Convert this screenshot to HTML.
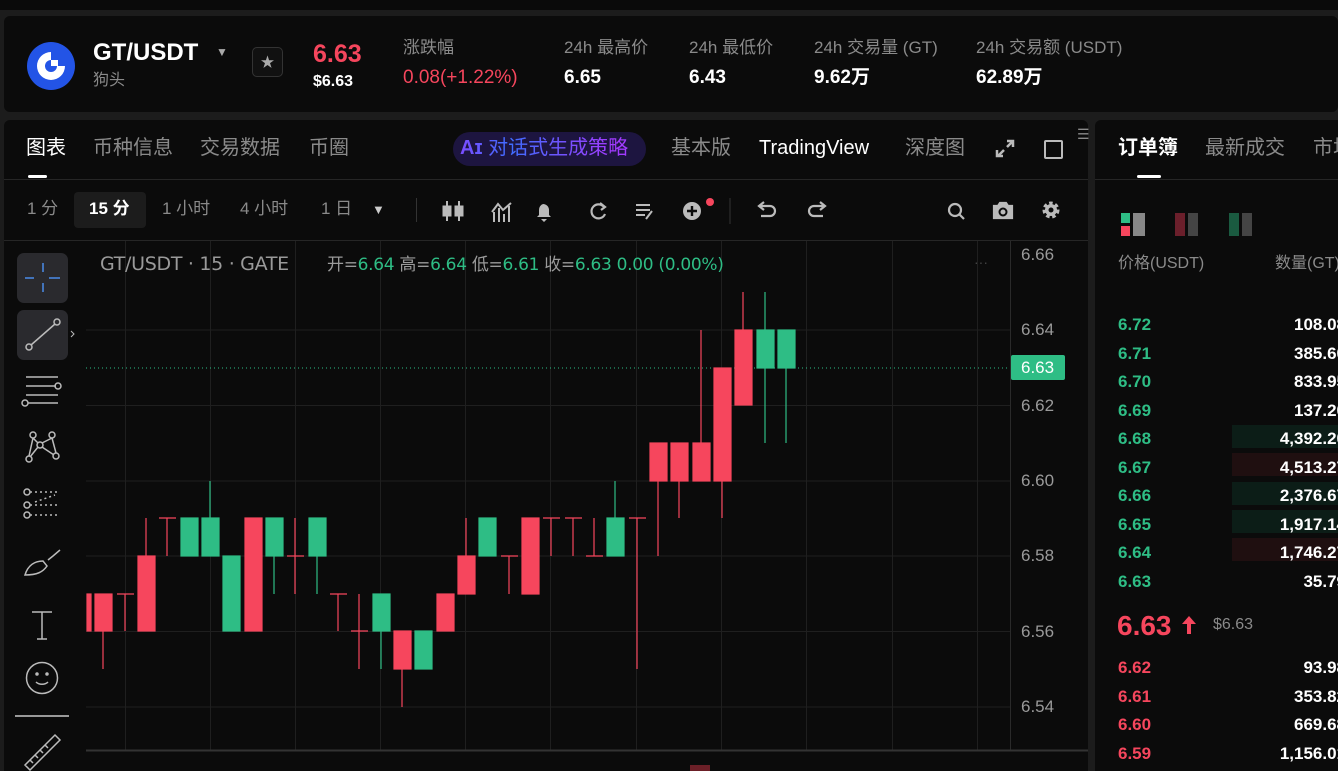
<!DOCTYPE html>
<html><head><meta charset="utf-8"><style>
*{margin:0;padding:0;box-sizing:border-box}
body{width:1338px;height:771px;background:#1c1c1c;overflow:hidden;font-family:"Liberation Sans","Noto Sans CJK SC",sans-serif;color:#fff;position:relative}
.p{position:absolute;background:#0b0b0b}
.t{position:absolute;white-space:nowrap;line-height:1.2}
.g{color:#8a8a8a}
.gr{color:#2ebd85}.rd{color:#f6465d}
</style></head><body>
<div class="p" style="left:0;top:0;width:1338px;height:10px;background:#0a0a0a"></div>
<div class="p" style="left:4px;top:16px;width:1334px;height:96px;border-radius:6px"></div>
<svg style="position:absolute;left:26px;top:41px" width="50" height="50" viewBox="0 0 50 50"><circle cx="25" cy="25" r="24" fill="#2354e6"/><path d="M25 11a14 14 0 1 0 14 14h-14z" fill="#fff"/><rect x="25" y="11" width="14" height="14" fill="#2354e6"/><circle cx="25" cy="25" r="6" fill="#2354e6"/><rect x="25" y="19" width="7" height="6" fill="#fff"/></svg>
<div class="t" style="left:93px;top:39px;font-size:24px;font-weight:bold">GT/USDT</div>
<div class="t" style="left:216px;top:45px;font-size:12px;color:#aaa">▼</div>
<div class="t g" style="left:93px;top:71px;font-size:16px">狗头</div>
<div style="position:absolute;left:252px;top:47px;width:31px;height:30px;border:1px solid #333;border-radius:5px;background:#111;color:#aaa;text-align:center;line-height:28px;font-size:14px">★</div>
<div class="t rd" style="left:313px;top:39px;font-size:25px;font-weight:bold">6.63</div>
<div class="t" style="left:313px;top:72px;font-size:16px;font-weight:bold">$6.63</div>
<div class="t g" style="left:403px;top:38px;font-size:17px">涨跌幅</div>
<div class="t rd" style="left:403px;top:67px;font-size:19px">0.08(+1.22%)</div>
<div class="t g" style="left:564px;top:38px;font-size:17px">24h 最高价</div>
<div class="t" style="left:564px;top:67px;font-size:19px;font-weight:bold">6.65</div>
<div class="t g" style="left:689px;top:38px;font-size:17px">24h 最低价</div>
<div class="t" style="left:689px;top:67px;font-size:19px;font-weight:bold">6.43</div>
<div class="t g" style="left:814px;top:38px;font-size:17px">24h 交易量 (GT)</div>
<div class="t" style="left:814px;top:67px;font-size:19px;font-weight:bold">9.62万</div>
<div class="t g" style="left:976px;top:38px;font-size:17px">24h 交易额 (USDT)</div>
<div class="t" style="left:976px;top:67px;font-size:19px;font-weight:bold">62.89万</div>

<div class="p" style="left:4px;top:120px;width:1084px;height:651px;border-radius:6px 6px 0 0"></div>
<div class="t" style="left:26px;top:136px;font-size:20px">图表</div>
<div style="position:absolute;left:28px;top:175px;width:19px;height:3px;background:#fff;border-radius:2px"></div>
<div class="t g" style="left:93px;top:136px;font-size:20px">币种信息</div>
<div class="t g" style="left:200px;top:136px;font-size:20px">交易数据</div>
<div class="t g" style="left:309px;top:136px;font-size:20px">币圈</div>
<div style="position:absolute;left:453px;top:132px;width:193px;height:34px;border-radius:17px;background:#1d1540"></div>
<div class="t" style="left:460px;top:136px;font-size:20px;background:linear-gradient(90deg,#7b4dff,#3f6dff 30%,#a13bff 90%);-webkit-background-clip:text;color:transparent"><b>Aɪ</b> 对话式生成策略</div>
<div class="t g" style="left:671px;top:136px;font-size:20px">基本版</div>
<div class="t" style="left:759px;top:136px;font-size:20px">TradingView</div>
<div class="t g" style="left:905px;top:136px;font-size:20px">深度图</div>
<svg style="position:absolute;left:994px;top:139px" width="22" height="20" viewBox="0 0 22 20" stroke="#bbb" stroke-width="2.5" fill="none"><path d="M4 17l6-6M13 8l6-6M3 11v6h6M19 8V2h-6"/></svg>
<div style="position:absolute;left:1044px;top:140px;width:19px;height:19px;border:2px solid #bbb;border-radius:2px"></div>
<div class="t g" style="left:1077px;top:126px;font-size:14px">☰</div>
<div style="position:absolute;left:4px;top:179px;width:1084px;height:1px;background:#262626"></div>

<div class="t g" style="left:27px;top:199px;font-size:17px">1 分</div>
<div style="position:absolute;left:74px;top:192px;width:72px;height:36px;background:#1c1c1c;border-radius:4px"></div>
<div class="t" style="left:89px;top:199px;font-size:17px;font-weight:bold">15 分</div>
<div class="t g" style="left:162px;top:199px;font-size:17px">1 小时</div>
<div class="t g" style="left:240px;top:199px;font-size:17px">4 小时</div>
<div class="t g" style="left:321px;top:199px;font-size:17px">1 日</div>
<div class="t" style="left:372px;top:202px;font-size:13px;color:#ccc">▼</div>
<div style="position:absolute;left:416px;top:198px;width:1px;height:24px;background:#333"></div>
<svg style="position:absolute;left:440px;top:198px" width="300" height="26" viewBox="0 0 300 26" fill="#bbb" stroke="#bbb">
<g stroke-width="2"><path d="M7 3v20M19 3v20" /></g><rect x="3" y="8" width="8" height="10"/><rect x="15" y="8" width="8" height="10"/>
<g stroke-width="2" fill="none"><path d="M54 24V14M59 24V10M64 24V16M69 24V8M52 14l6-8 5 6 8-7"/></g>
<path d="M103 6a6 6 0 0 1 6 6v5l2 2H97l2-2v-5a6 6 0 0 1 4-6z M101 21h6l-3 3z" stroke="none"/>
<g stroke-width="2.2" fill="none"><path d="M164 9a7 7 0 1 0 1 7"/><path d="M160 5l5 4-4 3" /></g>
<g stroke-width="2" fill="none"><path d="M196 7h14M196 12h14M196 17h9M206 21l6-8"/></g>
<circle cx="252" cy="13" r="9" stroke="none"/><path d="M252 8v10M247 13h10" stroke="#0b0b0b" stroke-width="2.4"/><circle cx="270" cy="4" r="4" fill="#f6465d" stroke="none"/>
<path d="M290 0v26" stroke="#333" stroke-width="1"/>
</svg>
<svg style="position:absolute;left:750px;top:198px" width="330" height="26" viewBox="0 0 330 26" fill="none" stroke="#bbb" stroke-width="2.2">
<path d="M10 8h10a5 5 0 0 1 0 10H11M14 4l-5 4 5 4"/>
<path d="M74 8H64a5 5 0 0 0 0 10h9M70 4l5 4-5 4"/>
<circle cx="205" cy="12" r="6"/><path d="M209 16l5 5"/>
<path d="M244 8h4l2-3h6l2 3h4v12h-18z" fill="#bbb"/><circle cx="253" cy="14" r="3.5" stroke="#0b0b0b" stroke-width="2"/>
<circle cx="301" cy="12" r="6" fill="#bbb" stroke-dasharray="3 2.3" stroke-width="5"/><circle cx="301" cy="12" r="2.5" fill="#0b0b0b" stroke="none"/>
</svg>
<div style="position:absolute;left:4px;top:240px;width:1084px;height:1px;background:#262626"></div>

<div style="position:absolute;left:17px;top:253px;width:51px;height:50px;background:#2a2a2e;border-radius:7px"></div>
<div style="position:absolute;left:17px;top:310px;width:51px;height:50px;background:#2a2a2e;border-radius:7px"></div>
<svg style="position:absolute;left:0;top:240px" width="86" height="531" viewBox="0 0 86 531" fill="none" stroke="#bbb" stroke-width="1.5">
<path d="M43 23v9M43 43v9M25 38h9M49 38h11" stroke="#4a8be8"/>
<circle cx="57" cy="82" r="3"/><circle cx="29" cy="107" r="3"/><path d="M31 105l24-21"/>
<path d="M26 137h32M26 146h30M26 155h32M28 163h30"/><circle cx="58" cy="146" r="3"/><circle cx="25" cy="163" r="3"/>
<circle cx="33" cy="195" r="3"/><circle cx="52" cy="195" r="3"/><circle cx="40" cy="205" r="3"/><circle cx="29" cy="219" r="3"/><circle cx="56" cy="216" r="3"/><path d="M33 198l-4 18M33 198l5 5M52 198l-10 5M52 198l4 15M42 207l12 8M38 207l-8 10"/>
<circle cx="27" cy="252" r="3"/><circle cx="27" cy="265" r="3"/><circle cx="27" cy="275" r="3"/><path d="M30 252h27M30 265h27M30 275h27M35 262l20-7" stroke-dasharray="2 3"/>
<path d="M25 335c3-10 10-14 18-14l4 5c-4 6-10 9-22 9zM48 320l5-4 7-6"/>
<path d="M32 372h20M42 372v27M37 399h10"/>
<circle cx="42" cy="438" r="15.5"/><circle cx="37" cy="434" r="1" fill="#bbb"/><circle cx="47" cy="434" r="1" fill="#bbb"/><path d="M36 442c3 3 9 3 12 0"/>
<path d="M15 476h54" stroke="#999" stroke-width="2"/>
<path d="M25 525l30-30 5 5-30 30zM30 520l3 3M35 515l3 3M40 510l3 3M45 505l3 3"/>
<path d="M71 91l3 3-3 3" stroke-width="1"/>
</svg>

<svg style="position:absolute;left:86px;top:241px" width="1002" height="530" viewBox="86 241 1002 530">
<g stroke="#1f1f1f" stroke-width="1">
<path d="M86 330H1010M86 405.5H1010M86 481H1010M86 556H1010M86 631.5H1010M86 707H1010"/>
<path d="M125.5 241V750M210.5 241V750M295.5 241V750M380.5 241V750M465.5 241V750M550.5 241V750M636.5 241V750M721.5 241V750M806.5 241V750M892.5 241V750M977.5 241V750"/>
</g>
<path d="M1010.5 241V750" stroke="#2a2a2a"/>
<path d="M86 750.5H1088" stroke="#333" stroke-width="2"/>
<path d="M86 368H1010" stroke="#2ebd85" stroke-dasharray="1 3" stroke-width="1"/>
<g stroke-width="1.2">
<g stroke="#f6465d" fill="#f6465d">
<rect x="87" y="594" width="4" height="37"/>
<line x1="103" y1="594" x2="103" y2="669"/><rect x="95" y="594" width="17" height="37"/>
<line x1="125" y1="594" x2="125" y2="631"/><line x1="117" y1="594" x2="134" y2="594"/>
<line x1="146" y1="518" x2="146" y2="631"/><rect x="138" y="556" width="17" height="75"/>
<line x1="167" y1="518" x2="167" y2="556"/><line x1="159" y1="518" x2="176" y2="518"/>
<rect x="245" y="518" width="17" height="113"/>
<line x1="295" y1="518" x2="295" y2="594"/><line x1="287" y1="556" x2="304" y2="556"/>
<line x1="338" y1="594" x2="338" y2="631"/><line x1="330" y1="594" x2="347" y2="594"/>
<line x1="359" y1="594" x2="359" y2="669"/><line x1="351" y1="631" x2="368" y2="631"/>
<line x1="402" y1="631" x2="402" y2="707"/><rect x="394" y="631" width="17" height="38"/>
<rect x="437" y="594" width="17" height="37"/>
<line x1="466" y1="518" x2="466" y2="594"/><rect x="458" y="556" width="17" height="38"/>
<line x1="509" y1="556" x2="509" y2="594"/><line x1="501" y1="556" x2="518" y2="556"/>
<rect x="522" y="518" width="17" height="76"/>
<line x1="551" y1="518" x2="551" y2="556"/><line x1="543" y1="518" x2="560" y2="518"/>
<line x1="573" y1="518" x2="573" y2="556"/><line x1="565" y1="518" x2="582" y2="518"/>
<line x1="594" y1="518" x2="594" y2="556"/><line x1="586" y1="556" x2="603" y2="556"/>
<line x1="637" y1="518" x2="637" y2="669"/><line x1="629" y1="518" x2="646" y2="518"/>
<line x1="658" y1="443" x2="658" y2="556"/><rect x="650" y="443" width="17" height="38"/>
<line x1="679" y1="443" x2="679" y2="518"/><rect x="671" y="443" width="17" height="38"/>
<line x1="701" y1="330" x2="701" y2="481"/><rect x="693" y="443" width="17" height="38"/>
<line x1="722" y1="368" x2="722" y2="518"/><rect x="714" y="368" width="17" height="113"/>
<line x1="743" y1="292" x2="743" y2="405"/><rect x="735" y="330" width="17" height="75"/>
</g>
<g stroke="#2ebd85" fill="#2ebd85">
<rect x="181" y="518" width="17" height="38"/>
<line x1="210" y1="481" x2="210" y2="556"/><rect x="202" y="518" width="17" height="38"/>
<rect x="223" y="556" width="17" height="75"/>
<line x1="274" y1="518" x2="274" y2="594"/><rect x="266" y="518" width="17" height="38"/>
<line x1="317" y1="518" x2="317" y2="594"/><rect x="309" y="518" width="17" height="38"/>
<line x1="381" y1="594" x2="381" y2="669"/><rect x="373" y="594" width="17" height="37"/>
<rect x="415" y="631" width="17" height="38"/>
<rect x="479" y="518" width="17" height="38"/>
<line x1="615" y1="481" x2="615" y2="556"/><rect x="607" y="518" width="17" height="38"/>
<line x1="765" y1="292" x2="765" y2="443"/><rect x="757" y="330" width="17" height="38"/>
<line x1="786" y1="330" x2="786" y2="443"/><rect x="778" y="330" width="17" height="38"/>
</g>
</g>
<rect x="690" y="765" width="20" height="6" fill="#6b1f27"/>
<rect x="1011" y="355" width="54" height="25" rx="2" fill="#2ebd85"/>
</svg>
<div class="t" style="left:100px;top:253px;font-size:19px;color:#9a9a9a;font-family:'DejaVu Sans','Noto Sans CJK SC',sans-serif;letter-spacing:-0.3px">GT/USDT · 15 · GATE</div>
<div class="t" style="left:327px;top:255px;font-size:17px;color:#9a9a9a;font-family:'DejaVu Sans','Noto Sans CJK SC',sans-serif;letter-spacing:-0.3px">开=<span class="gr">6.64</span> 高=<span class="gr">6.64</span> 低=<span class="gr">6.61</span> 收=<span class="gr">6.63</span> <span class="gr">0.00 (0.00%)</span></div>
<div class="t" style="left:974px;top:254px;font-size:14px;color:#444">···</div>
<div class="t" style="left:1021px;top:244px;font-size:17px;color:#9a9a9a;line-height:22px">6.66</div>
<div class="t" style="left:1021px;top:319px;font-size:17px;color:#9a9a9a;line-height:22px">6.64</div>
<div class="t" style="left:1021px;top:357px;font-size:17px;color:#fff;line-height:22px">6.63</div>
<div class="t" style="left:1021px;top:395px;font-size:17px;color:#9a9a9a;line-height:22px">6.62</div>
<div class="t" style="left:1021px;top:470px;font-size:17px;color:#9a9a9a;line-height:22px">6.60</div>
<div class="t" style="left:1021px;top:545px;font-size:17px;color:#9a9a9a;line-height:22px">6.58</div>
<div class="t" style="left:1021px;top:621px;font-size:17px;color:#9a9a9a;line-height:22px">6.56</div>
<div class="t" style="left:1021px;top:696px;font-size:17px;color:#9a9a9a;line-height:22px">6.54</div>

<div class="p" style="left:1095px;top:120px;width:243px;height:651px;border-radius:6px 0 0 0"></div>
<div class="t" style="left:1118px;top:136px;font-size:20px;font-weight:bold">订单簿</div>
<div style="position:absolute;left:1137px;top:175px;width:24px;height:3px;background:#fff;border-radius:2px"></div>
<div class="t g" style="left:1205px;top:136px;font-size:20px">最新成交</div>
<div class="t g" style="left:1313px;top:136px;font-size:20px">市场</div>
<div style="position:absolute;left:1095px;top:179px;width:243px;height:1px;background:#262626"></div>
<div style="position:absolute;left:1121px;top:213px;width:9px;height:10px;background:#2ebd85"></div>
<div style="position:absolute;left:1121px;top:226px;width:9px;height:10px;background:#f6465d"></div>
<div style="position:absolute;left:1133px;top:213px;width:12px;height:23px;background:#888"></div>
<div style="position:absolute;left:1175px;top:213px;width:10px;height:23px;background:#6b1f2b"></div>
<div style="position:absolute;left:1188px;top:213px;width:10px;height:23px;background:#444"></div>
<div style="position:absolute;left:1229px;top:213px;width:10px;height:23px;background:#1a5a40"></div>
<div style="position:absolute;left:1242px;top:213px;width:10px;height:23px;background:#444"></div>
<div class="t g" style="left:1118px;top:254px;font-size:16px">价格(USDT)</div>
<div class="t g" style="left:1275px;top:254px;font-size:16px">数量(GT)</div>
<div style="position:absolute;left:1232px;top:425px;width:106px;height:23px;background:#0c1d17"></div>
<div style="position:absolute;left:1232px;top:453px;width:106px;height:23px;background:#1f0f10"></div>
<div style="position:absolute;left:1232px;top:482px;width:106px;height:23px;background:#0c1d17"></div>
<div style="position:absolute;left:1232px;top:510px;width:106px;height:23px;background:#0c1d17"></div>
<div style="position:absolute;left:1232px;top:538px;width:106px;height:23px;background:#1f0f10"></div>
<div style="position:absolute;left:1118px;top:311px;width:220px;font-size:17px;font-weight:bold;line-height:28.5px">
<div class="gr">6.72<span style="float:right;color:#fff;margin-right:-8px">108.08</span></div>
<div class="gr">6.71<span style="float:right;color:#fff;margin-right:-8px">385.60</span></div>
<div class="gr">6.70<span style="float:right;color:#fff;margin-right:-8px">833.95</span></div>
<div class="gr">6.69<span style="float:right;color:#fff;margin-right:-8px">137.20</span></div>
<div class="gr">6.68<span style="float:right;color:#fff;margin-right:-8px">4,392.20</span></div>
<div class="gr">6.67<span style="float:right;color:#fff;margin-right:-8px">4,513.27</span></div>
<div class="gr">6.66<span style="float:right;color:#fff;margin-right:-8px">2,376.67</span></div>
<div class="gr">6.65<span style="float:right;color:#fff;margin-right:-8px">1,917.14</span></div>
<div class="gr">6.64<span style="float:right;color:#fff;margin-right:-8px">1,746.27</span></div>
<div class="gr">6.63<span style="float:right;color:#fff;margin-right:-8px">35.79</span></div>
</div>
<div class="t rd" style="left:1117px;top:609px;font-size:28px;font-weight:bold">6.63</div>
<svg style="position:absolute;left:1181px;top:615px" width="16" height="20" viewBox="0 0 16 20" fill="#f6465d"><path d="M8 1l7 8h-5v10H6V9H1z"/></svg>
<div class="t g" style="left:1213px;top:615px;font-size:16px">$6.63</div>
<div style="position:absolute;left:1118px;top:654px;width:220px;font-size:17px;font-weight:bold;line-height:28.5px">
<div class="rd">6.62<span style="float:right;color:#fff;margin-right:-8px">93.98</span></div>
<div class="rd">6.61<span style="float:right;color:#fff;margin-right:-8px">353.82</span></div>
<div class="rd">6.60<span style="float:right;color:#fff;margin-right:-8px">669.68</span></div>
<div class="rd">6.59<span style="float:right;color:#fff;margin-right:-8px">1,156.01</span></div>
</div>
</body></html>
